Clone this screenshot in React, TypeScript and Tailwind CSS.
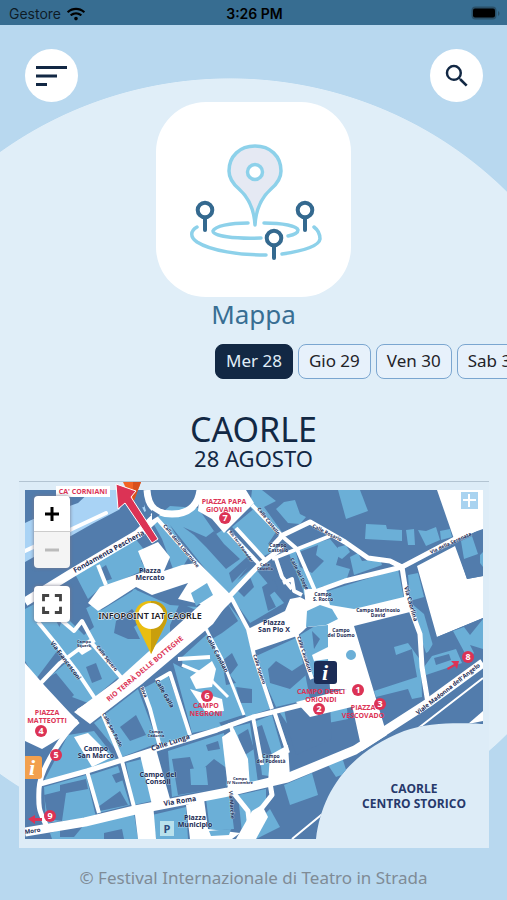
import { ReactNode } from "react";
import { FaWifi } from "react-icons/fa";
import { MdFullscreen, MdSearch } from "react-icons/md";

const DAYS = ["Mer 28", "Gio 29", "Ven 30", "Sab 31"];

// light blocks of houses
const BLOCKS = [
  "75,575 134,538 146,553 141,562 146,570 97,592 88,600",
  "152,522 170,507 198,509 216,535 224,530 252,562 226,596 170,526 194,566 176,578 162,540",
  "252,491 262,491 276,502 264,508 282,533 262,520 250,508",
  "256,508 276,533 268,545 278,550 262,558 232,528",
  "276,510 284,503 295,501 300,515 306,518 300,525 288,524",
  "338,491 360,491 368,512 346,520",
  "366,525 386,526 387,530 402,531 402,542 365,540",
  "406,531 414,530 415,546 408,546",
  "418,531 426,532 436,528 440,541 426,547",
  "440,532 450,530 452,538 441,541",
  "338,548 346,546 350,553 342,560 335,556",
  "350,558 358,554 362,562 380,560 382,566 354,576",
  "296,560 318,548 328,552 334,570 318,592 304,596",
  "288,552 330,540 340,552 336,566 350,570 346,582 312,590 302,588",
  "325,593 398,570 404,600 330,616 318,600",
  "408,576 418,574 424,598 410,602",
  "412,605 424,615 434,650 426,654 418,630",
  "25,610 44,600 66,640 36,680 25,662",
  "62,622 92,606 104,612 112,640 90,640 72,666 54,640",
  "40,686 88,645 128,670 88,704",
  "92,640 134,590 170,606 198,608 150,654 118,680",
  "100,612 136,590 150,620 148,656 116,678 84,636",
  "226,590 254,568 284,604 250,624",
  "182,658 226,618 246,640 268,708 218,724 196,690 184,690",
  "200,622 226,602 246,628 252,655 270,710 246,718 228,680 212,640",
  "142,690 168,676 190,738 160,746",
  "94,724 138,690 158,744 122,758",
  "173,664 188,672 204,700 222,728 192,734",
  "254,658 298,638 310,700 276,708",
  "300,636 330,618 332,640 352,650 346,690 312,676",
  "44,782 68,736 94,732 116,760 88,770",
  "44,788 86,776 96,818 46,824",
  "90,776 118,767 130,806 98,814",
  "126,764 142,760 152,802 134,806",
  "168,752 224,734 230,786 172,798",
  "234,728 250,724 258,784 248,786 236,756",
  "256,722 272,716 288,772 276,778 262,776",
  "280,714 300,706 308,728 292,732",
  "92,820 134,814 138,840 52,840 50,834",
  "152,816 186,808 188,840 156,840",
  "206,800 230,797 234,830 210,832",
  "238,796 266,790 266,806 242,834",
  "284,786 312,774 318,796 290,806",
  "328,766 342,758 347,774 336,778",
  "244,836 270,810 280,828 256,840",
  "374,692 417,678 412,650 396,656 394,648 408,644 421,662 422,698 412,700 408,690 376,698",
  "325,704 346,700 348,720 328,724",
];

// courtyards and darker roofs
const COURTS = [
  "183,528 206,538 214,532 224,545 240,560 226,570 206,548 194,536",
  "177,577 190,556 198,566 188,574",
  "229,574 256,550 258,558 232,584",
  "236,590 250,578 254,588 244,598",
  "262,588 274,580 278,590 270,596 276,608 268,612",
  "296,554 318,546 316,556 324,562 312,574 300,568",
  "100,570 106,566 112,580 105,582",
  "60,606 84,604 94,628 84,636 68,620",
  "42,682 56,674 74,696 62,708 52,706",
  "86,668 96,664 102,680 92,684",
  "116,622 132,610 142,622 134,628 140,640 128,640 114,634",
  "180,604 198,612 208,606 186,632 170,640 170,626",
  "206,622 228,605 238,622 222,634 212,640",
  "222,662 232,654 238,666 230,676 236,684 226,686",
  "236,688 252,690 252,704 240,704",
  "268,670 276,662 292,672 304,664 306,676 290,690 270,684",
  "312,632 320,640 314,650",
  "120,728 136,716 146,736 130,742",
  "44,796 60,792 60,786 86,780 88,790 66,794 62,822 48,820",
  "98,808 120,792 128,806 100,812",
  "112,776 124,772 126,780 116,784",
  "172,760 190,758 196,776 214,760 228,770 226,788 178,796",
  "206,746 218,742 220,750 208,752",
  "238,736 248,730 254,750 242,758",
  "252,730 262,726 272,756 262,756",
  "284,710 300,704 330,706 332,740 296,756 288,730",
  "104,834 122,830 124,840 104,840",
  "60,830 84,826 74,838 60,838",
  "158,758 166,754 168,774 160,776",
];

const SQUARES = [
  "437,491 483,491 483,531 454,540",
  "417,567 455,547 467,580 483,577 483,619 437,638",
  "88,604 100,588 146,572 138,552 158,543 170,558 164,572 182,566 196,564 216,584 234,600 214,620 204,606 178,600 188,584 152,596 136,588 108,606 98,612",
  "25,664 44,686 70,714 78,722 62,738 42,750 25,742",
  "74,713 116,682 212,595 228,604 213,625 142,685 90,725",
  "248,630 285,612 290,600 300,598 313,605 307,628 303,632 297,637 253,652",
  "304,590 326,590 330,606 354,610 408,597 410,613 354,627 387,736 362,752 352,706 346,690 330,690 328,660 314,662 312,656 328,648 328,626 308,628",
  "296,703 346,690 360,706 310,718",
  "200,491 246,491 254,504 224,534 212,520 198,512",
  "190,678 212,662 216,670 212,688 196,690",
  "190,690 222,700 224,712 206,714",
  "74,738 88,734 112,758 92,768",
  "140,756 156,750 170,800 152,806",
  "186,806 204,800 208,830 240,834 232,840 190,840",
  "222,738 234,730 248,760 250,788 228,790",
  "270,756 288,746 290,778 268,784",
  "252,812 262,806 268,818 256,840 236,840",
  "134,808 153,804 156,840 138,840",
  "76,650 86,644 92,650 82,656",
];

const ROADS = [
  { d: "M25 833 85 823 135 811 228 793 287 779 355 751 428 704 483 664", w: 9 },
  { d: "M25 603 72 574 138 535 156 518", w: 9 },
  { d: "M40 785 87 772 122 761 162 748 217 731 253 718 345 695", w: 5 },
  { d: "M78 722C66 732 40 768 39 790S40 812 46 826", w: 5 },
  { d: "M152 514 197 565 213 581 232 600 248 630 254 656 272 710", w: 4 },
  { d: "M226 601 258 567 283 548", w: 5 },
  { d: "M228 532 260 566M236 529 266 562", w: 4 },
  { d: "M252 506 283 538 297 550 316 594", w: 4 },
  { d: "M270 550 283 536 310 523 345 543 368 559 390 562 402 568 407 600 420 635 422 668 428 704", w: 5 },
  { d: "M272 560 330 537 M276 560 282 578 292 590", w: 4 },
  { d: "M312 594 345 582 402 568 455 540 483 526", w: 5 },
  { d: "M38 623 56 645 78 674 98 704 122 762 134 808", w: 4 },
  { d: "M38 687 60 664 90 642 126 684M60 620 74 632 82 622 94 644", w: 4 },
  { d: "M87 772 99 814M98 700 78 712M156 682 170 674 190 736", w: 4 },
  { d: "M142 688 150 710 160 748M178 660 210 658", w: 4 },
  { d: "M205 628 222 660 244 716M182 666 206 676 228 698", w: 3 },
  { d: "M296 634 312 680M253 718 262 766M274 712 288 754M230 724 240 758", w: 4 },
  { d: "M232 792 248 812 250 830M270 784 272 796 250 824", w: 5 },
  { d: "M98 566 106 586M156 590 196 566", w: 4 },
  { d: "M292 840 326 812M412 734 483 679", w: 2 },
];

const STREETS = [
  { x: 75, y: 574, r: -29, s: 7, t: "Fondamenta Pescheria" },
  { x: 50, y: 644, r: 53, s: 6, t: "Via Francesconi" },
  { x: 96, y: 648, r: 52, s: 5, t: "Calle Squero" },
  { x: 163, y: 527, r: 51, s: 5, t: "Calle delle Liburniche" },
  { x: 257, y: 510, r: 52, s: 5, t: "Calle Castello" },
  { x: 229, y: 533, r: 54, s: 4, t: "Rio Terrà Pomodor" },
  { x: 290, y: 560, r: 63, s: 5, t: "Calle del Doge" },
  { x: 312, y: 528, r: 27, s: 5, t: "Calle Rosario" },
  { x: 431, y: 555, r: -25, s: 5, t: "Via della Serenata" },
  { x: 404, y: 588, r: 74, s: 6, t: "Via Caorlina" },
  { x: 206, y: 638, r: 62, s: 6, t: "Calle Candian" },
  { x: 253, y: 656, r: 72, s: 5, t: "Calle Squero" },
  { x: 297, y: 638, r: 72, s: 5, t: "Calle Cavallotti" },
  { x: 155, y: 682, r: 60, s: 6, t: "Calle Galla" },
  { x: 140, y: 689, r: 65, s: 5, t: "Riva" },
  { x: 102, y: 715, r: 62, s: 5, t: "Calle San Paolo" },
  { x: 152, y: 752, r: -18, s: 7, t: "Calle Lunga" },
  { x: 164, y: 807, r: -9, s: 7, t: "Via Roma" },
  { x: 25, y: 835, r: -8, s: 6, t: "Moro" },
  { x: 229, y: 792, r: 86, s: 5, t: "Via Marche" },
  { x: 418, y: 716, r: -38, s: 6, t: "Viale Madonna dell'Angelo" },
];

const PLACES = [
  { x: 150, y: 574, s: 7, t: ["Piazza", "Mercato"] },
  { x: 274, y: 626, s: 7, t: ["Piazza", "San Pio X"] },
  { x: 96, y: 752, s: 7, t: ["Campo", "San Marco"] },
  { x: 158, y: 778, s: 7, t: ["Campo dei", "Consoli"] },
  { x: 195, y: 821, s: 7, t: ["Piazza", "Municipio"] },
  { x: 84, y: 644, s: 4, t: ["Campo", "Squero"] },
  { x: 156, y: 734, s: 4, t: ["Campo", "Cadorna"] },
  { x: 278, y: 548, s: 5, t: ["Campo", "Castello"] },
  { x: 265, y: 567, s: 4, t: ["Calle", "Castello"] },
  { x: 323, y: 597, s: 5, t: ["Campo", "S. Rocco"] },
  { x: 378, y: 613, s: 5, t: ["Campo Marinosio", "David"] },
  { x: 341, y: 633, s: 5, t: ["Campo", "del Duomo"] },
  { x: 271, y: 759, s: 5, t: ["Campo", "del Podestà"] },
  { x: 240, y: 781, s: 4, t: ["Campo", "IV Novembre"] },
];

const STAGES = [
  { x: 224, y: 505, t: ["PIAZZA PAPA", "GIOVANNI"] },
  { x: 47, y: 716, t: ["PIAZZA", "MATTEOTTI"] },
  { x: 206, y: 709, t: ["CAMPO", "NEGRONI"] },
  { x: 321, y: 695, t: ["CAMPO DEGLI", "ORIONDI"] },
  { x: 363, y: 711, t: ["PIAZZA", "VESCOVADO"] },
];

const PINS = [
  { n: 1, x: 358, y: 691 },
  { n: 2, x: 319, y: 710 },
  { n: 3, x: 380, y: 705 },
  { n: 4, x: 41, y: 732 },
  { n: 5, x: 56, y: 756 },
  { n: 6, x: 207, y: 697 },
  { n: 7, x: 225, y: 519 },
  { n: 8, x: 468, y: 658 },
  { n: 9, x: 50, y: 817 },
];

function StatusBar() {
  return (
    <div className="flex items-center justify-between h-[25px] pt-[2px] pl-[9px] pr-[7px] bg-[#376d91] font-['Inter'] text-sm text-black">
      <div className="flex flex-1 items-center gap-[6px] text-black/75">
        Gestore
        <FaWifi className="h-[18px] w-[18px] text-black" />
      </div>
      <span className="font-semibold">3:26 PM</span>
      <div className="flex flex-1 justify-end">
        <svg width="29" height="15" viewBox="0 0 29 15">
          <rect x="0.5" y="0.5" width="25" height="13" rx="4" fill="#2b5068" />
          <rect x="2" y="2.5" width="22" height="9" rx="2" />
          <path d="M27 5v5c2-1 2-4 0-5z" fill="#2b5068" />
        </svg>
      </div>
    </div>
  );
}

function RoundButton({ label, children }: { label: string; children: ReactNode }) {
  return (
    <button
      aria-label={label}
      className="flex h-[53px] w-[53px] items-center justify-center rounded-full bg-white text-[#122844]"
    >
      {children}
    </button>
  );
}

function SmallPin({ x, y }: { x: number; y: number }) {
  return (
    <g stroke="#34698f" strokeWidth="4" strokeLinecap="round">
      <circle cx={x} cy={y} r="7.3" fill="#fff" />
      <path d={`M${x} ${y + 8}v12`} />
    </g>
  );
}

function MapLogo() {
  return (
    <svg viewBox="0 0 195 195" className="h-full w-full" fill="none">
      <g stroke="#8dd1ea" strokeWidth="3.5" strokeLinecap="round">
        <path d="M41 125C34 129 34 135 41 140C55 149 84 153 110 153M126 152C146 149 163 144 164 137C164 131 162 128 158 125" />
        <path d="M92 121C74 121 59 124 57 129C57 134 78 137 105 136M108 121C127 121 141 124 142 128C142 131 137 133 132 134" />
        <path
          d="M99 123C98 105 92 95 83 87C76 81 73 76 73 69C73 54 84 44 99 44S125 54 125 69C125 76 122 81 115 87C106 95 100 105 99 123Z"
          fill="#e5e9f3"
          strokeLinejoin="round"
        />
        <circle cx="99" cy="70" r="7.5" fill="#fff" />
      </g>
      <SmallPin x={49} y={108} />
      <SmallPin x={149} y={108} />
      <SmallPin x={118} y={136} />
    </svg>
  );
}

function Arrow({ d }: { d: string }) {
  return <path d={d} fill="#dc3355" />;
}

function CityMap() {
  return (
    <svg viewBox="19 483 470 366" className="block w-full overflow-hidden" fontFamily="'Open Sans', sans-serif">
      <defs>
        <clipPath id="town">
          <path d="M25 491H483V725C469 724 430 722 404 732C352 752 322 790 316 840H25Z" />
        </clipPath>
      </defs>
      <g clipPath="url(#town)">
        <path d="M25 491H483V840H25Z" fill="#527cac" />
        <path d="M25 523 78 504 92 491H140L146 512 25 586Z" fill="#a9d3f5" />
        <path d="M25 505 60 491H92L25 524ZM25 563 92 525 128 506 142 508 148 520 25 600ZM128 491H148L144 508 118 514Z" fill="#527cac" />
        <path d="M25 552 72 530 106 514" stroke="#fff" strokeWidth="4" fill="none" strokeLinecap="round" />
        <g fill="#6bafd7">
          {BLOCKS.map((points) => (
            <polygon key={points} points={points} />
          ))}
        </g>
        <g fill="#527cac">
          {COURTS.map((points) => (
            <polygon key={points} points={points} />
          ))}
        </g>
        <g fill="#fff">
          {SQUARES.map((points) => (
            <polygon key={points} points={points} />
          ))}
        </g>
        <path d="M454 540 483 530V577L467 580Z" fill="#527cac" />
        <path d="M461 542 472 537 478 555 464 560ZM480 556 483 553V568L480 564ZM191 594 207 584 213 596 196 607ZM190 770 206 768 208 786 191 786ZM209 832 231 830 229 836 211 837ZM346 656A5 5 0 0 1 356 656A5 5 0 0 1 346 656Z" fill="#6bafd7" />
        <path d="M307 612 320 606 332 610 338 620 326 626 306 628Z" fill="#6bafd7" />
        <path d="M437 638 483 619V662L432 698 424 660Z" fill="#527cac" />
        <path d="M424 668 432 657 456 650 462 664 426 676ZM453 632 464 628 470 636 483 620V650L470 646 474 654 468 660Z" fill="#6bafd7" />
        <path d="M434 659 449 655 451 661 436 666Z" fill="#527cac" />
        <g stroke="#fff" fill="none" strokeLinejoin="round">
          {ROADS.map(({ d, w }) => (
            <path key={d} d={d} strokeWidth={w} />
          ))}
          <path d="M147 491C148 510 158 515 172 515C188 515 198 507 200 491" strokeWidth="7" />
          <path d="M283 584 292 580 294 592 302 596" strokeWidth="4" />
        </g>
        <path d="M152 511 160 516 152 521Z" fill="#527cac" />
        <path d="M468 725 483 712V722Z" fill="#fff" />

        <g fill="#1c2c55" fontWeight="700" stroke="#fff" strokeWidth="1" paintOrder="stroke" strokeOpacity="0.4">
          {STREETS.map(({ x, y, r, s, t }) => (
            <text key={x + t} x={x} y={y} fontSize={s} transform={`rotate(${r} ${x} ${y})`}>
              {t}
            </text>
          ))}
          {PLACES.map(({ x, y, s, t }) => (
            <text key={x + t[1]} fontSize={s} textAnchor="middle">
              <tspan x={x} y={y}>{t[0]}</tspan>
              <tspan x={x} y={y + s}>{t[1]}</tspan>
            </text>
          ))}
        </g>
        <g fill="#dc3355" fontWeight="700" fontSize="7">
          {STAGES.map(({ x, y, t }) => (
            <text key={t[1]} textAnchor="middle">
              <tspan x={x} y={y}>{t[0]}</tspan>
              <tspan x={x} y={y + 8}>{t[1]}</tspan>
            </text>
          ))}
          <text x="109" y="703" transform="rotate(-40 109 703)">
            RIO TERRÀ DELLE BOTTEGHE
          </text>
        </g>
        {PINS.map(({ n, x, y }) => (
          <g key={n}>
            <circle cx={x} cy={y} r="6" fill="#dc3355" />
            <text x={x} y={y + 3} fontSize="9" fontWeight="700" fill="#fff" textAnchor="middle">
              {n}
            </text>
          </g>
        ))}
        <Arrow d="M447 669 454 665 451 662 459 662 457 670 455 667 448 671Z" />
        <Arrow d="M28 820 35 816V819H42V822H35V825Z" />

        <rect x="314" y="662" width="23" height="23" rx="3" fill="#1b2c56" />
        <rect x="20" y="757" width="22" height="23" rx="3" fill="#f2a04e" />
        <g fill="#fff" fontFamily="'Liberation Serif', serif" fontWeight="700" fontStyle="italic" textAnchor="middle">
          <text x="325" y="681" fontSize="22">i</text>
          <text x="32" y="776" fontSize="22">i</text>
        </g>
        <rect x="160" y="822" width="14" height="15" fill="#b9e1ec" />
        <text x="167" y="834" fontSize="11" fontWeight="700" fill="#2c4b7d" textAnchor="middle">P</text>
        <rect x="461" y="493" width="17" height="17" fill="#a9d3f0" />
        <path d="M469 495V508M463 501H476" stroke="#fff" strokeWidth="2" />
      </g>

      <rect x="56" y="487" width="54" height="11" fill="#fff" />
      <text x="83" y="495" fontSize="7" fontWeight="700" fill="#dc3355" textAnchor="middle">CA' CORNIANI</text>
      <path d="M123 483H141L133 504Z" fill="#f26323" />
      <path d="M133 483H141L133 504Z" fill="#d8501c" />
      <path
        d="M116 485 136 492 131 498 158 540 152 544 125 504 118 510Z"
        fill="#dc3355"
        stroke="#fff"
        strokeWidth="1"
      />

      <path d="M151 655 136 624C132 610 139 602 151 602S170 610 166 624Z" fill="#eabe11" />
      <path d="M151 655V602C163 602 170 610 166 624Z" fill="#c99f0c" />
      <circle cx="151" cy="617" r="13" fill="#fff" />
      <text
        x="150"
        y="620"
        fontSize="9"
        fontWeight="600"
        fill="#1d2024"
        textAnchor="middle"
        stroke="#fff"
        strokeWidth="1"
        paintOrder="stroke"
        fontFamily="'Noto Sans', sans-serif"
      >
        INFOPOINT IAT CAORLE
      </text>

      <g fill="#27396b" fontSize="12" fontWeight="700" textAnchor="middle">
        <text x="414" y="794">CAORLE</text>
        <text x="414" y="809">CENTRO STORICO</text>
      </g>
    </svg>
  );
}

function MapControls() {
  return (
    <div className="absolute left-[15px] top-[14px] flex flex-col gap-[18px]">
      <div className="flex flex-col overflow-hidden rounded-sm shadow-[0_0_3px_1px_#7789]">
        <button aria-label="Zoom in" className="flex h-9 w-9 items-center justify-center border-b border-[#ccc] bg-white">
          <svg width="16" height="16" viewBox="0 0 16 16" stroke="#000" strokeWidth="3">
            <path d="M8 1v14M1 8h14" />
          </svg>
        </button>
        <button
          aria-label="Zoom out"
          className="flex h-9 w-9 items-center justify-center bg-[#f4f4f4]"
          disabled
        >
          <svg width="16" height="16" viewBox="0 0 16 16" stroke="#bbb" strokeWidth="3">
            <path d="M1 8h14" />
          </svg>
        </button>
      </div>
      <button
        aria-label="Full screen"
        className="flex h-9 w-9 items-center justify-center rounded-sm bg-white text-[#444] shadow-[0_0_3px_1px_#7789]"
      >
        <MdFullscreen className="h-[34px] w-[34px] shrink-0" />
      </button>
    </div>
  );
}

export default function App() {
  return (
    <div className="flex min-h-screen flex-col overflow-x-hidden bg-[#b8d8ef] bg-[radial-gradient(391px_385px_at_230px_463px,#e0eef8_99.8%,#b8d8ef_100%)] font-['Noto_Sans',sans-serif] text-[#122844]">
      <StatusBar />
      <header className="flex justify-between pl-[25px] pr-6 pt-6">
        <RoundButton label="Menu">
          <svg width="32" height="22" viewBox="0 0 32 22" stroke="currentColor" strokeWidth="3">
            <path d="M0 2.5h31M0 11h21M0 19.5h11" />
          </svg>
        </RoundButton>
        <RoundButton label="Cerca">
          <MdSearch className="h-[30px] w-[30px]" />
        </RoundButton>
      </header>
      <main>
        <div className="mx-auto h-[195px] w-[195px] rounded-[50px] bg-white">
          <MapLogo />
        </div>
        <h1 className="text-center text-[26px] leading-[34px] text-[#386e93]">Mappa</h1>
        <nav className="mt-[13px] flex gap-[5px] overflow-hidden pl-[215px]">
          {DAYS.map((day, i) => (
            <button
              key={day}
              className={
                "h-[35px] shrink-0 rounded-lg border px-[10px] pb-[2px] text-[17px] " +
                (i === 0
                  ? "border-[#122844] bg-[#122844] text-[#e0eef8]"
                  : "border-[#7ba6d0] bg-[#e7f1fb] text-[#1f2328]")
              }
            >
              {day}
            </button>
          ))}
        </nav>
        <div className="mt-[32px] text-center">
          <h2 className="text-[34px] leading-9">CAORLE</h2>
          <h3 className="text-[22px] leading-[22px]">28 AGOSTO</h3>
        </div>
        <div className="relative ml-[19px] mr-[18px] mt-[12px] border-t border-[#b3c4d2] bg-[#ddecf7]">
          <CityMap />
          <MapControls />
        </div>
      </main>
      <footer className="pt-[14px] text-center text-[17px] leading-8 text-[#7f8b96]">
        © Festival Internazionale di Teatro in Strada
      </footer>
    </div>
  );
}
